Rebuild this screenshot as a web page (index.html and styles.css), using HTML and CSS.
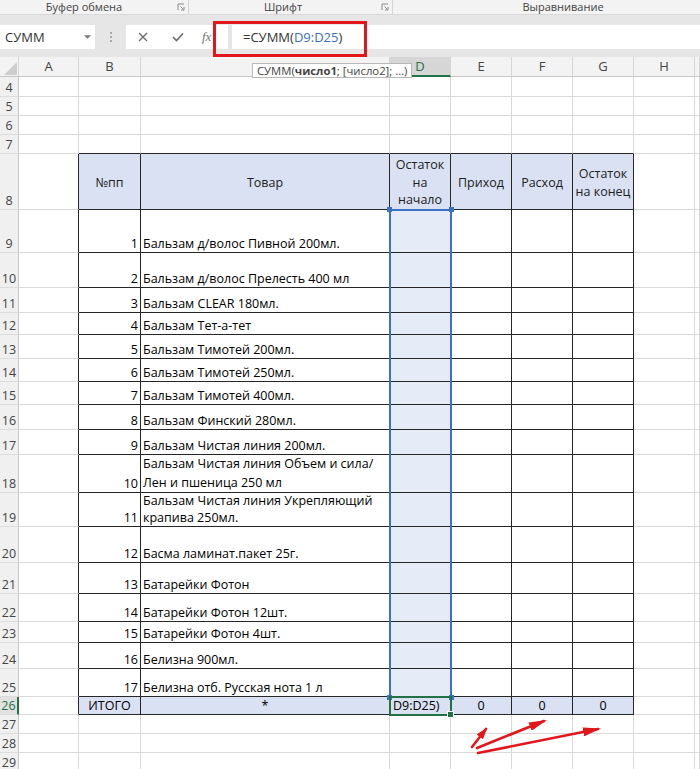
FILE: index.html
```html
<!DOCTYPE html>
<html lang="ru">

<head>
    <meta charset="UTF-8">
    <meta name="viewport" content="width=device-width, initial-scale=1.0">
    <title>Остатки товара</title>
    <link rel="stylesheet" href="styles.css">
</head>

<body>
    <div class="app">
        <div class="ribbon-groups">
            <div class="group group-clipboard">
                <span>Буфер обмена</span>
                <svg class="launcher" viewBox="0 0 8 8"><path d="M1 7V1h6" /><path d="M3.5 3.5l3 3M7 4v3H4" /></svg>
            </div>
            <div class="group group-font">
                <span>Шрифт</span>
                <svg class="launcher" viewBox="0 0 8 8"><path d="M1 7V1h6" /><path d="M3.5 3.5l3 3M7 4v3H4" /></svg>
            </div>
            <div class="group group-align">
                <span>Выравнивание</span>
            </div>
        </div>

        <div class="formula-bar">
            <div class="name-box">
                <span>СУММ</span>
                <svg class="drop" viewBox="0 0 8 4"><path d="M0 0h8L4 4z" /></svg>
            </div>
            <div class="grip"><i></i><i></i><i></i></div>
            <div class="fx-buttons">
                <svg class="btn-cancel" viewBox="0 0 10 10"><path d="M1 1l8 8M9 1l-8 8" /></svg>
                <svg class="btn-enter" viewBox="0 0 12 10"><path d="M1 5l3.5 3.5L11 1.5" /></svg>
                <span class="btn-fx">fx</span>
            </div>
            <div class="formula-input">=СУММ(<span class="ref">D9:D25</span>)</div>
        </div>

        <div class="sheet">
            <table class="grid">
                <colgroup>
                    <col class="w-head">
                    <col class="w-a">
                    <col class="w-b">
                    <col class="w-c">
                    <col class="w-col">
                    <col class="w-col">
                    <col class="w-col">
                    <col class="w-col">
                    <col class="w-col">
                    <col class="w-rest">
                </colgroup>
                <thead>
                    <tr>
                        <th class="corner"><i class="select-all"></i></th>
                        <!-- column C's letter sits under the argument hint -->
                        <th>A</th><th>B</th><th></th><th class="on">D</th><th>E</th><th>F</th><th>G</th><th>H</th><th></th>
                    </tr>
                </thead>
                <tbody>
                    <tr class="h20"><th>4</th><td></td><td></td><td></td><td></td><td></td><td></td><td></td><td></td><td></td></tr>
                    <tr class="h19"><th>5</th><td></td><td></td><td></td><td></td><td></td><td></td><td></td><td></td><td></td></tr>
                    <tr class="h19"><th>6</th><td></td><td></td><td></td><td></td><td></td><td></td><td></td><td></td><td></td></tr>
                    <tr class="h19"><th>7</th><td></td><td class="above"></td><td class="above"></td><td class="above"></td><td class="above"></td><td class="above"></td><td class="above"></td><td></td><td></td></tr>

                    <tr class="h56 head-row">
                        <th>8</th><td class="edge"></td>
                        <td class="t">№пп</td>
                        <td class="t">Товар</td>
                        <td class="t">Остаток<br>на<br>начало</td>
                        <td class="t">Приход</td>
                        <td class="t">Расход</td>
                        <td class="t">Остаток<br>на конец</td>
                        <td></td><td></td>
                    </tr>

                    <tr class="h43"><th>9</th><td class="edge"></td><td class="t num">1</td><td class="t">Бальзам д/волос Пивной 200мл.</td><td class="t pick"></td><td class="t"></td><td class="t"></td><td class="t"></td><td></td><td></td></tr>
                    <tr class="h35"><th>10</th><td class="edge"></td><td class="t num">2</td><td class="t">Бальзам д/волос Прелесть 400 мл</td><td class="t pick"></td><td class="t"></td><td class="t"></td><td class="t"></td><td></td><td></td></tr>
                    <tr class="h25"><th>11</th><td class="edge"></td><td class="t num">3</td><td class="t">Бальзам CLEAR 180мл.</td><td class="t pick"></td><td class="t"></td><td class="t"></td><td class="t"></td><td></td><td></td></tr>
                    <tr class="h22"><th>12</th><td class="edge"></td><td class="t num">4</td><td class="t">Бальзам Тет-а-тет</td><td class="t pick"></td><td class="t"></td><td class="t"></td><td class="t"></td><td></td><td></td></tr>
                    <tr class="h24"><th>13</th><td class="edge"></td><td class="t num">5</td><td class="t">Бальзам Тимотей 200мл.</td><td class="t pick"></td><td class="t"></td><td class="t"></td><td class="t"></td><td></td><td></td></tr>
                    <tr class="h23"><th>14</th><td class="edge"></td><td class="t num">6</td><td class="t">Бальзам Тимотей 250мл.</td><td class="t pick"></td><td class="t"></td><td class="t"></td><td class="t"></td><td></td><td></td></tr>
                    <tr class="h23"><th>15</th><td class="edge"></td><td class="t num">7</td><td class="t">Бальзам Тимотей 400мл.</td><td class="t pick"></td><td class="t"></td><td class="t"></td><td class="t"></td><td></td><td></td></tr>
                    <tr class="h25"><th>16</th><td class="edge"></td><td class="t num">8</td><td class="t">Бальзам Финский 280мл.</td><td class="t pick"></td><td class="t"></td><td class="t"></td><td class="t"></td><td></td><td></td></tr>
                    <tr class="h25"><th>17</th><td class="edge"></td><td class="t num">9</td><td class="t">Бальзам Чистая линия 200мл.</td><td class="t pick"></td><td class="t"></td><td class="t"></td><td class="t"></td><td></td><td></td></tr>
                    <tr class="h38"><th>18</th><td class="edge"></td><td class="t num">10</td><td class="t"><div class="wrap wrap-37">Бальзам Чистая линия Объем и сила/<br>Лен и пшеница 250 мл</div></td><td class="t pick"></td><td class="t"></td><td class="t"></td><td class="t"></td><td></td><td></td></tr>
                    <tr class="h34"><th>19</th><td class="edge"></td><td class="t num">11</td><td class="t"><div class="wrap wrap-33">Бальзам Чистая линия Укрепляющий<br>крапива 250мл.</div></td><td class="t pick"></td><td class="t"></td><td class="t"></td><td class="t"></td><td></td><td></td></tr>
                    <tr class="h36"><th>20</th><td class="edge"></td><td class="t num">12</td><td class="t">Басма ламинат.пакет 25г.</td><td class="t pick"></td><td class="t"></td><td class="t"></td><td class="t"></td><td></td><td></td></tr>
                    <tr class="h31"><th>21</th><td class="edge"></td><td class="t num">13</td><td class="t">Батарейки Фотон</td><td class="t pick"></td><td class="t"></td><td class="t"></td><td class="t"></td><td></td><td></td></tr>
                    <tr class="h28"><th>22</th><td class="edge"></td><td class="t num">14</td><td class="t">Батарейки Фотон 12шт.</td><td class="t pick"></td><td class="t"></td><td class="t"></td><td class="t"></td><td></td><td></td></tr>
                    <tr class="h21"><th>23</th><td class="edge"></td><td class="t num">15</td><td class="t">Батарейки Фотон 4шт.</td><td class="t pick"></td><td class="t"></td><td class="t"></td><td class="t"></td><td></td><td></td></tr>
                    <tr class="h26"><th>24</th><td class="edge"></td><td class="t num">16</td><td class="t">Белизна 900мл.</td><td class="t pick"></td><td class="t"></td><td class="t"></td><td class="t"></td><td></td><td></td></tr>
                    <tr class="h28"><th>25</th><td class="edge"></td><td class="t num">17</td><td class="t">Белизна отб. Русская нота 1 л</td><td class="t pick"></td><td class="t"></td><td class="t"></td><td class="t"></td><td></td><td></td></tr>

                    <tr class="h18 total-row">
                        <th class="on">26</th><td class="edge"></td>
                        <td class="t">ИТОГО</td>
                        <td class="t">*</td>
                        <td class="t editing">D9:D25)</td>
                        <td class="t">0</td>
                        <td class="t">0</td>
                        <td class="t">0</td>
                        <td></td><td></td>
                    </tr>

                    <tr class="h19"><th>27</th><td></td><td></td><td></td><td></td><td></td><td></td><td></td><td></td><td></td></tr>
                    <tr class="h19"><th>28</th><td></td><td></td><td></td><td></td><td></td><td></td><td></td><td></td><td></td></tr>
                    <tr class="h19"><th>29</th><td></td><td></td><td></td><td></td><td></td><td></td><td></td><td></td><td></td></tr>
                </tbody>
            </table>

            <!-- argument hint under the formula bar -->
            <div class="hint">СУММ(<b>число1</b>; [число2]; ...)</div>

            <!-- range referenced by the formula: D9:D25 -->
            <div class="ref-range">
                <i class="knob knob-tl"></i><i class="knob knob-tr"></i>
                <i class="knob knob-bl"></i><i class="knob knob-br"></i>
            </div>

            <!-- cell being edited: D26 -->
            <div class="active-cell"><i class="fill-handle"></i></div>
        </div>

        <svg class="marks" viewBox="0 0 700 769">
            <defs>
                <marker id="tip" markerUnits="userSpaceOnUse" markerWidth="18" markerHeight="9" refX="15" refY="4.5" orient="auto">
                    <path d="M0 0L18 4.5L0 9z" />
                </marker>
                <marker id="tip-small" markerUnits="userSpaceOnUse" markerWidth="12" markerHeight="8" refX="10" refY="4" orient="auto">
                    <path d="M0 0L12 4L0 8z" />
                </marker>
            </defs>
            <rect x="214.5" y="22.5" width="151" height="33" />
            <line x1="472" y1="747" x2="486" y2="729" marker-end="url(#tip-small)" />
            <line x1="477" y1="748" x2="544" y2="721" marker-end="url(#tip)" />
            <line x1="478" y1="753" x2="598" y2="729" marker-end="url(#tip)" />
        </svg>
    </div>
</body>

</html>
```

FILE: styles.css
```css
* {
    box-sizing: border-box;
}

body {
    margin: 0;
    font-family: "Open Sans", "Noto Sans", sans-serif;
    color: #222;
    background: #ffffff;
}

.app {
    position: relative;
    width: 700px;
    height: 769px;
    overflow: hidden;
}

/* ribbon group captions */
.ribbon-groups {
    display: flex;
    height: 15px;
    background: #f3f3f3;
    border-bottom: 1px solid #d9d9d9;
    font-size: 11px;
    color: #444;
}

.group {
    display: flex;
    align-items: center;
    height: 14px;
    border-right: 1px solid #d4d4d4;
}

.group span {
    flex: 1;
    text-align: center;
    line-height: 14px;
}

.group-clipboard {
    width: 189px;
}

.group-clipboard span {
    padding-right: 9px;
}

.group-font {
    width: 204px;
}

.group-font span {
    padding-right: 4px;
}

.group-align {
    flex: 1;
    border-right: none;
}

.group-align span {
    padding-left: 33px;
}

.launcher {
    width: 8px;
    height: 8px;
    margin-right: 3px;
    fill: none;
    stroke: #8a8a8a;
    stroke-width: 1;
}

/* formula bar */
.formula-bar {
    display: flex;
    height: 42px;
    padding: 10px 0 8px;
    background: #e6e6e6;
}

.name-box {
    width: 95px;
    display: flex;
    align-items: center;
    justify-content: space-between;
    padding: 0 4px 0 5px;
    background: #fff;
    font-size: 13px;
    color: #333;
}

.drop {
    width: 7px;
    height: 4px;
    fill: #777;
}

.grip {
    width: 31px;
    display: flex;
    flex-direction: column;
    align-items: center;
    justify-content: center;
    gap: 2px;
}

.grip i {
    width: 2px;
    height: 2px;
    background: #a8a8a8;
}

.fx-buttons {
    width: 102px;
    display: flex;
    align-items: center;
    background: #fff;
    padding-left: 12px;
}

.btn-cancel {
    width: 10px;
    height: 10px;
    fill: none;
    stroke: #6b6b6b;
    stroke-width: 1.4;
}

.btn-enter {
    width: 12px;
    height: 10px;
    margin-left: 24px;
    fill: none;
    stroke: #6b6b6b;
    stroke-width: 1.6;
}

.btn-fx {
    margin-left: 18px;
    font-family: "Liberation Serif", serif;
    font-style: italic;
    font-size: 13px;
    color: #777;
}

.formula-input {
    flex: 1;
    margin-left: 4px;
    padding-left: 11px;
    background: #fff;
    font-size: 13px;
    line-height: 24px;
    color: #333;
}

.formula-input .ref {
    color: #3a6fc4;
}

/* worksheet */
.sheet {
    position: relative;
}

.grid {
    table-layout: fixed;
    width: 700px;
    border-collapse: separate;
    border-spacing: 0;
    font-family: "Open Sans", "Noto Sans", sans-serif;
    font-size: 12.5px;
    line-height: 17px;
    color: #000;
}

.w-head { width: 19px; }
.w-a { width: 60px; }
.w-b { width: 62px; }
.w-c { width: 249px; }
.w-col { width: 61px; }
.w-rest { width: 5px; }

.grid thead th {
    height: 20px;
    padding: 0;
    background: #f3f3f3;
    border-right: 1px solid #d6d6d6;
    border-bottom: 1px solid #c6c6c6;
    font-weight: normal;
    font-size: 13px;
    color: #444;
}

.grid thead th.on {
    background: #d6d6d6;
    border-bottom: 2px solid #217346;
    color: #217346;
}

.grid thead th.corner {
    vertical-align: bottom;
    padding-bottom: 1px;
}

.select-all {
    display: block;
    width: 13px;
    height: 13px;
    margin-left: auto;
    margin-right: 1px;
    background: #cdcdcd;
    clip-path: polygon(100% 0, 100% 100%, 0 100%);
}

.grid tbody th {
    padding: 0;
    background: #f0f0f0;
    border-right: 1px solid #c6c6c6;
    border-bottom: 1px solid #dcdcdc;
    font-weight: normal;
    font-size: 12.5px;
    color: #444;
    text-align: center;
    vertical-align: bottom;
}

.grid tbody th.on {
    background: #e1e1e1;
    border-right: 2px solid #217346;
    color: #217346;
    vertical-align: middle;
}

.grid td {
    padding: 0 2px;
    border-right: 1px solid #d9d9d9;
    border-bottom: 1px solid #d9d9d9;
    vertical-align: bottom;
    white-space: nowrap;
    overflow: hidden;
}

.grid td.edge {
    border-right-color: #262626;
}

.grid td.above {
    border-bottom-color: #262626;
}

.grid td.t {
    border-right-color: #262626;
    border-bottom-color: #262626;
}

.grid td.num {
    text-align: right;
}

.grid td.pick {
    background: #e6ecf7;
}

.head-row td.t {
    padding: 2px 1px 0;
    background: #d9e1f2;
    text-align: center;
    vertical-align: middle;
    line-height: 17.6px;
    color: #222;
}

.total-row td.t {
    background: #d9e1f2;
    text-align: center;
    vertical-align: middle;
    line-height: 16px;
}

.total-row td.editing {
    text-align: left;
    padding-left: 3px;
}

/* two-line names keep their bottom line when the row is short */
.wrap {
    display: flex;
    flex-direction: column;
    justify-content: flex-end;
    overflow: hidden;
    line-height: 18.5px;
}

.wrap-37 { height: 37px; }

.wrap-33 {
    height: 33px;
    line-height: 16.5px;
}

.h18 { height: 18px; }
.h19 { height: 19px; }
.h20 { height: 20px; }
.h21 { height: 21px; }
.h22 { height: 22px; }
.h23 { height: 23px; }
.h24 { height: 24px; }
.h25 { height: 25px; }
.h26 { height: 26px; }
.h28 { height: 28px; }
.h31 { height: 31px; }
.h34 { height: 34px; }
.h35 { height: 35px; }
.h36 { height: 36px; }
.h38 { height: 38px; }
.h43 { height: 43px; }
.h56 { height: 56px; }

.hint {
    position: absolute;
    left: 252px;
    top: 6px;
    width: 160px;
    height: 15px;
    padding-left: 4px;
    background: #fff;
    border: 1px solid #b9b9b9;
    font-size: 11.3px;
    line-height: 13px;
    color: #444;
    white-space: nowrap;
    overflow: hidden;
}

.hint b {
    font-weight: bold;
}

.ref-range {
    position: absolute;
    left: 389px;
    top: 152px;
    width: 63px;
    height: 489px;
    border: 2px solid #3c6fc6;
}

.knob {
    position: absolute;
    width: 5px;
    height: 5px;
    background: #3c6fc6;
}

.knob-tl { left: -4px; top: -4px; }
.knob-tr { right: -4px; top: -4px; }
.knob-bl { left: -4px; bottom: -4px; }
.knob-br { right: -4px; bottom: -4px; }

.active-cell {
    position: absolute;
    left: 389px;
    top: 639px;
    width: 63px;
    height: 20px;
    border: 2px solid #217346;
}

.fill-handle {
    position: absolute;
    right: -4px;
    bottom: -4px;
    width: 5px;
    height: 5px;
    background: #217346;
    border: 1px solid #fff;
    box-sizing: content-box;
}

/* red call-outs drawn over the window */
.marks {
    position: absolute;
    left: 0;
    top: 0;
    width: 700px;
    height: 769px;
    pointer-events: none;
}

.marks rect {
    fill: none;
    stroke: #e3161c;
    stroke-width: 3;
}

.marks line {
    stroke: #e3161c;
    stroke-width: 2.6;
    stroke-linecap: round;
}

.marks marker path {
    fill: #e3161c;
}
```
